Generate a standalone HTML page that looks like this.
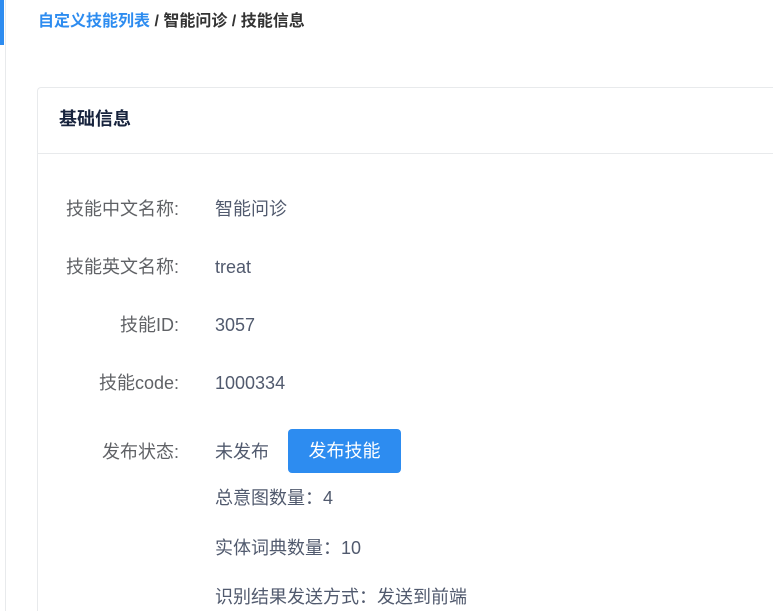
<!DOCTYPE html>
<html><head><meta charset="utf-8"><style>
html,body{margin:0;width:773px;height:611px;overflow:hidden}
body{background:#fff;font-family:"Liberation Sans","Noto Sans CJK SC",sans-serif;position:relative}
.bar{position:absolute;left:0;top:0;width:4px;height:45px;background:#2d8cf0}
.vl{position:absolute;left:5px;top:0;width:1px;height:611px;background:#e8eaec}
.bc{position:absolute;left:38px;top:11px;font-size:16px;font-weight:bold;color:#333;line-height:22px}
.bc span{color:#2d8cf0}
.card{position:absolute;left:37px;top:87px;width:740px;height:524px;border:1px solid #e8eaec;border-bottom:none;border-right:none;border-radius:4px 0 0 0;box-sizing:border-box}
.hd{height:66px;box-sizing:border-box;border-bottom:1px solid #e8eaec;font-size:18px;font-weight:bold;color:#17233d;line-height:63px;padding-left:21px}
.row{position:absolute;left:0;width:760px;font-size:18px;color:#606266;line-height:22px}
.lb{position:absolute;right:619px;text-align:right;white-space:nowrap}
.v{position:absolute;left:177px;white-space:nowrap;color:#515a6e}
.btn{position:absolute;left:250px;top:341px;width:113px;height:44px;background:#2d8cf0;border-radius:4px;color:#fff;font-size:18px;text-align:center;line-height:44px}
</style></head><body>
<div class="bar"></div><div class="vl"></div>
<div class="bc"><span>自定义技能列表</span> / 智能问诊 / 技能信息</div>
<div class="card">
<div class="hd">基础信息</div>
<div class="row" style="top:110px"><div class="lb">技能中文名称:</div><div class="v">智能问诊</div></div>
<div class="row" style="top:168px"><div class="lb">技能英文名称:</div><div class="v">treat</div></div>
<div class="row" style="top:226px"><div class="lb">技能ID:</div><div class="v">3057</div></div>
<div class="row" style="top:284px"><div class="lb">技能code:</div><div class="v">1000334</div></div>
<div class="row" style="top:353px"><div class="lb">发布状态:</div><div class="v">未发布</div></div>
<div class="btn">发布技能</div>
<div class="row" style="top:399px"><div class="v">总意图数量：4</div></div>
<div class="row" style="top:449px"><div class="v">实体词典数量：10</div></div>
<div class="row" style="top:498px"><div class="v">识别结果发送方式：发送到前端</div></div>
</div>
</body></html>
